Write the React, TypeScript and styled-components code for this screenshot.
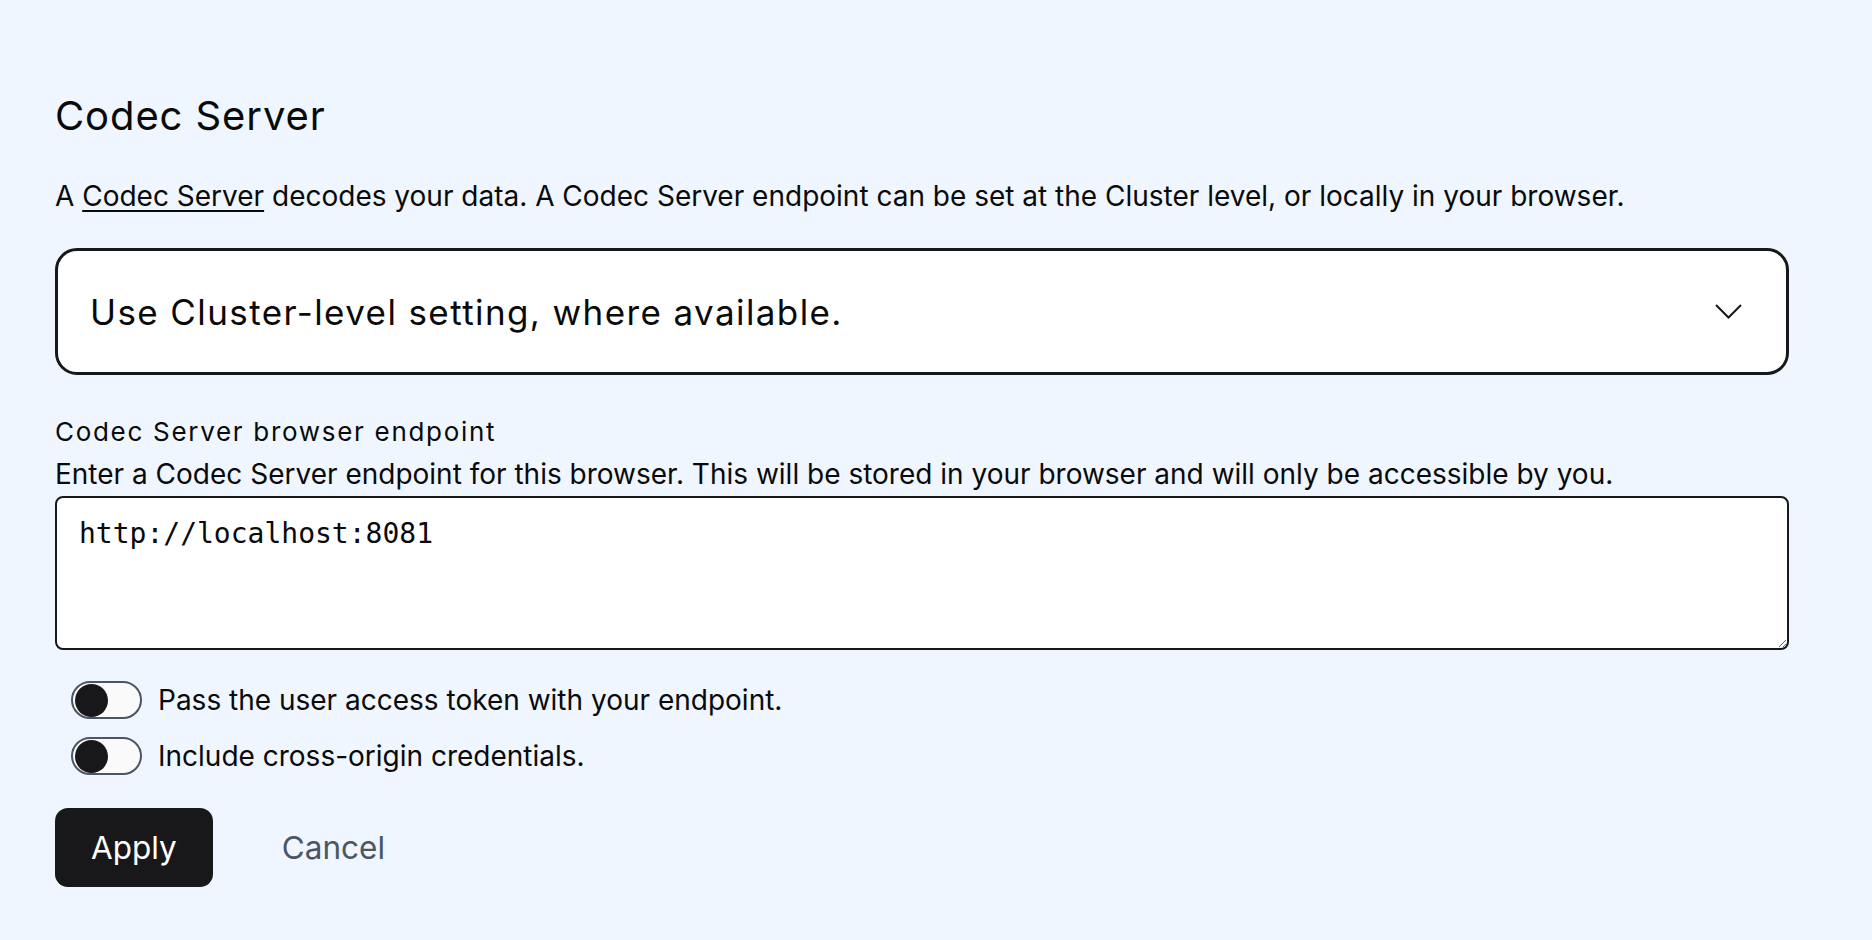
import React from 'react';
import styled, { createGlobalStyle } from 'styled-components';

const GlobalStyle = createGlobalStyle`
  html, body {
    margin: 0;
    padding: 0;
    background: #eff6ff;
  }
  body {
    font-family: Inter, "Liberation Sans", sans-serif;
    color: #0a0a0a;
  }
`;

const Page = styled.div`
  display: flex;
  flex-direction: column;
  padding: 92px 83px 40px 55px;
  min-height: 940px;
  box-sizing: border-box;
`;

const Title = styled.h1`
  margin: 0;
  font-family: Inter, sans-serif;
  font-size: 40px;
  line-height: 48px;
  font-weight: 400;
  letter-spacing: 0.9px;
`;

const Intro = styled.p`
  margin: 36px 0 0;
  font-size: 28px;
  line-height: 40px;
`;

const TextLink = styled.a`
  color: inherit;
  text-decoration: underline;
  text-underline-offset: 4px;
  text-decoration-thickness: 2px;
`;

const SelectBox = styled.div`
  margin-top: 32px;
  height: 127px;
  box-sizing: border-box;
  border: 3px solid #18181b;
  border-radius: 22px;
  background: #ffffff;
  display: flex;
  align-items: center;
  justify-content: space-between;
  padding: 0 44px 0 32px;
  cursor: pointer;
`;

const SelectText = styled.span`
  font-size: 35px;
  line-height: 40px;
  letter-spacing: 1.4px;
`;

const Label = styled.div`
  margin-top: 37px;
  font-size: 26px;
  line-height: 40px;
  letter-spacing: 1.7px;
`;

const Help = styled.div`
  margin-top: 2px;
  font-size: 28px;
  line-height: 40px;
`;

const Endpoint = styled.textarea`
  margin-top: 2px;
  height: 154px;
  box-sizing: border-box;
  border: 2px solid #18181b;
  border-radius: 8px;
  background: #ffffff;
  padding: 16px 22px;
  font-family: "DejaVu Sans Mono", "Liberation Mono", monospace;
  font-size: 28px;
  line-height: 40px;
  color: #0a0a0a;
  outline: none;
`;

const Toggles = styled.div`
  margin-top: 30px;
  display: flex;
  flex-direction: column;
  gap: 16px;
  padding-left: 16px;
`;

const ToggleRow = styled.label`
  display: flex;
  align-items: center;
  gap: 16px;
  height: 40px;
  font-size: 28px;
  line-height: 40px;
  cursor: pointer;
`;

const Track = styled.span<{ $on?: boolean }>`
  width: 71px;
  height: 38px;
  box-sizing: border-box;
  border: 2px solid #4b5563;
  border-radius: 19px;
  background: ${p => (p.$on ? '#18181b' : '#fafafa')};
  display: flex;
  align-items: center;
  justify-content: ${p => (p.$on ? 'flex-end' : 'flex-start')};
  padding: 0 2px;
  flex-shrink: 0;
`;

const Knob = styled.span<{ $on?: boolean }>`
  width: 33px;
  height: 33px;
  border-radius: 50%;
  background: ${p => (p.$on ? '#fafafa' : '#18181b')};
`;

const Actions = styled.div`
  margin-top: 32px;
  display: flex;
  align-items: center;
  gap: 33px;
`;

const Button = styled.button<{ $primary?: boolean }>`
  height: 79px;
  padding: 0 36px;
  border: none;
  border-radius: 13px;
  font-family: Inter, sans-serif;
  font-size: 31.5px;
  background: ${p => (p.$primary ? '#18181b' : 'transparent')};
  color: ${p => (p.$primary ? '#ffffff' : '#4b5563')};
  cursor: pointer;
`;

const Chevron = () => (
  <svg width="27" height="15" viewBox="0 0 27 15" fill="none">
    <path d="M1 1 L13.5 13.5 L26 1" stroke="#18181b" strokeWidth="2" />
  </svg>
);

const Toggle: React.FC<{ label: string; on?: boolean }> = ({ label, on }) => (
  <ToggleRow>
    <Track $on={on}>
      <Knob $on={on} />
    </Track>
    {label}
  </ToggleRow>
);

export default function App() {
  return (
    <>
      <GlobalStyle />
      <Page>
        <Title>Codec Server</Title>
        <Intro>
          A <TextLink href="#">Codec Server</TextLink> decodes your data. A Codec Server endpoint can be set
          at the Cluster level, or locally in your browser.
        </Intro>
        <SelectBox>
          <SelectText>Use Cluster-level setting, where available.</SelectText>
          <Chevron />
        </SelectBox>
        <Label>Codec Server browser endpoint</Label>
        <Help>
          Enter a Codec Server endpoint for this browser. This will be stored in your browser and will only be
          accessible by you.
        </Help>
        <Endpoint defaultValue="http://localhost:8081" spellCheck={false} />
        <Toggles>
          <Toggle label="Pass the user access token with your endpoint." />
          <Toggle label="Include cross-origin credentials." />
        </Toggles>
        <Actions>
          <Button $primary>Apply</Button>
          <Button>Cancel</Button>
        </Actions>
      </Page>
    </>
  );
}
